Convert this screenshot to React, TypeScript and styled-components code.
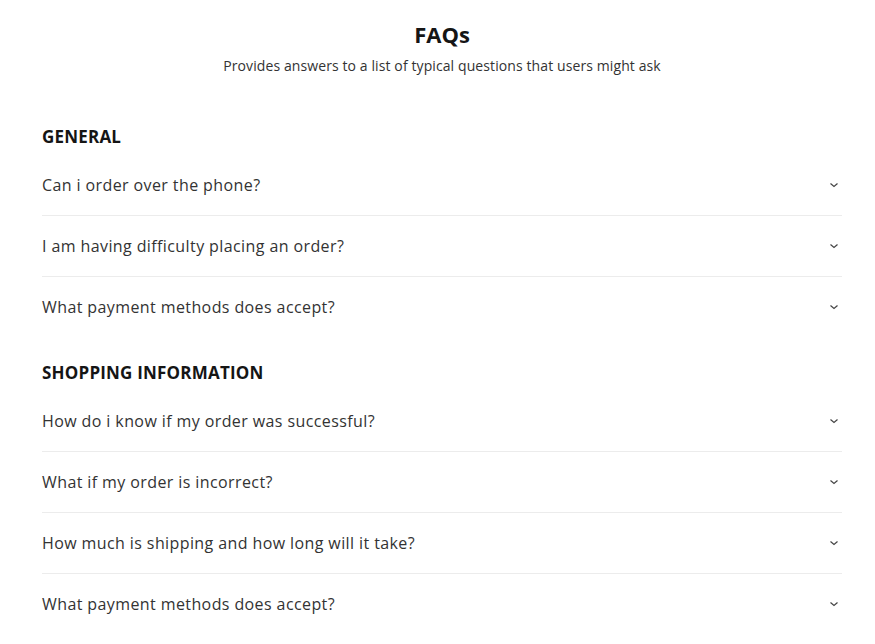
import styled, { createGlobalStyle } from "styled-components";

const GlobalStyle = createGlobalStyle`
  body {
    margin: 0;
    background: #ffffff;
    font-family: "Open Sans", "Noto Sans", sans-serif;
  }
`;

const Page = styled.div`
  width: 800px;
  padding: 0 33px 0 42px;
  margin-top: 20px;
`;

const Header = styled.header`
  display: flex;
  flex-direction: column;
  align-items: center;
  margin-bottom: 49px;
`;

const Title = styled.h1`
  margin: 0;
  font-size: 22px;
  line-height: 28px;
  font-weight: 700;
  color: #151515;
`;

const Subtitle = styled.p`
  margin: 8px 0 0;
  font-size: 14px;
  line-height: 20px;
  letter-spacing: 0.1px;
  color: #333;
`;

const Section = styled.section`
  margin-bottom: 23px;
`;

const SectionTitle = styled.h2`
  margin: 0 0 6px;
  font-size: 17px;
  line-height: 24px;
  font-weight: 700;
  letter-spacing: 0.2px;
  color: #151515;
`;

const Row = styled.div`
  display: flex;
  align-items: center;
  justify-content: space-between;
  height: 60px;
  border-bottom: 1px solid #ececec;
  cursor: pointer;
  &:last-child {
    border-bottom-color: transparent;
  }
`;

const Question = styled.span`
  font-size: 16px;
  font-weight: 500;
  letter-spacing: 0.4px;
  color: #333;
`;

const Chevron = styled.svg`
  width: 10px;
  height: 10px;
  margin-right: 3px;
  color: #444;
`;

const sections = [
  {
    title: "GENERAL",
    items: [
      "Can i order over the phone?",
      "I am having difficulty placing an order?",
      "What payment methods does accept?",
    ],
  },
  {
    title: "SHOPPING INFORMATION",
    items: [
      "How do i know if my order was successful?",
      "What if my order is incorrect?",
      "How much is shipping and how long will it take?",
      "What payment methods does accept?",
    ],
  },
];

const App = () => {
  return (
    <Page>
      <GlobalStyle />
      <Header>
        <Title>FAQs</Title>
        <Subtitle>Provides answers to a list of typical questions that users might ask</Subtitle>
      </Header>
      {sections.map((s) => (
        <Section key={s.title}>
          <SectionTitle>{s.title}</SectionTitle>
          {s.items.map((q, i) => (
            <Row key={i}>
              <Question>{q}</Question>
              <Chevron viewBox="0 0 10 10" fill="none" stroke="currentColor" strokeWidth="1.2">
                <path d="M1.5 3.5 L5 6.5 L8.5 3.5" />
              </Chevron>
            </Row>
          ))}
        </Section>
      ))}
    </Page>
  );
};

export default App;
